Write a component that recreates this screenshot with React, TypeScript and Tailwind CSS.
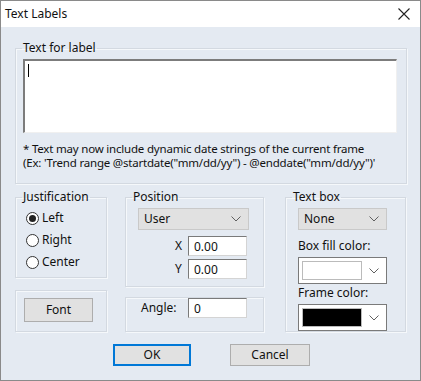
import React, { useState } from 'react';

const FONT = "font-['Segoe_UI','Noto_Sans',sans-serif]";

const Chevron = ({ className = '' }: { className?: string }) => (
  <svg width="10" height="6" viewBox="0 0 10 6" className={className}>
    <path d="M0.5 0.5 L5 5 L9.5 0.5" fill="none" stroke="#606060" strokeWidth="1" />
  </svg>
);

const Group = ({
  label,
  className = '',
  inner = '',
  children,
}: {
  label?: string;
  className?: string;
  inner?: string;
  children: React.ReactNode;
}) => (
  <fieldset className={`border border-[#d3d9e1] shadow-[inset_1px_1px_0_#f5f8fb,1px_1px_0_#f5f8fb] ${className}`}>
    {label && <legend className="ml-[6px] px-[1px] leading-[16px]">{label}</legend>}
    <div className={inner}>{children}</div>
  </fieldset>
);

const Radio = ({ label, checked, onClick }: { label: string; checked: boolean; onClick: () => void }) => (
  <button onClick={onClick} className="flex items-center h-[16px] gap-[3px]">
    <span className="w-[13px] h-[13px] rounded-full border border-[#333] bg-white flex items-center justify-center">
      {checked && <span className="w-[7px] h-[7px] rounded-full bg-[#222]" />}
    </span>
    <span>{label}</span>
  </button>
);

const Combo = ({ value, className = '' }: { value: string; className?: string }) => (
  <div className={`h-[22px] bg-[#e1e1e1] border border-[#c9c9c9] flex items-center pl-[5px] pr-[7px] justify-between ${className}`}>
    <span>{value}</span>
    <Chevron />
  </div>
);

const ColorCombo = ({ color }: { color: string }) => (
  <div className="w-[89px] h-[27px] bg-white border border-[#7a7a7a] flex items-center pl-[3px] pr-[7px] justify-between">
    <div className={`w-[60px] h-[19px] border border-[#bbb] ${color}`} />
    <Chevron />
  </div>
);

export default function App() {
  const [justify, setJustify] = useState<'Left' | 'Right' | 'Center'>('Left');
  const [labelText, setLabelText] = useState('');

  return (
    <div className={`w-[421px] h-[381px] border border-[#8a8a8a] flex flex-col text-[12px] text-[#111] ${FONT}`}>
      <div className="h-[26px] bg-white flex items-center justify-between pl-[4px] pr-[10px] shrink-0">
        <span className="text-[12px]">Text Labels</span>
        <svg width="12" height="12" viewBox="0 0 12 12">
          <path d="M0.5 0.5 L11.5 11.5 M11.5 0.5 L0.5 11.5" stroke="#222" strokeWidth="1.1" />
        </svg>
      </div>

      <div className="flex-1 bg-[#e4eaf2] pl-[14px] pt-[13px]">
        <Group label="Text for label" className="w-[392px] h-[144px]" inner="pl-[7px] pt-[3px]">
          <div className="relative">
            <textarea
              value={labelText}
              onChange={(e) => setLabelText(e.target.value)}
              className="block w-[374px] h-[74px] bg-white border-t-2 border-l-2 border-[#7c7c7c] border-r border-b border-r-[#f0f0f0] border-b-[#f0f0f0] resize-none outline-none px-[3px] caret-black"
            />
            {labelText === '' && (
              <span className="absolute left-[5px] top-[5px] w-[1px] h-[13px] bg-black pointer-events-none" />
            )}
          </div>
          <div className="mt-[9px] leading-[14px] text-[11.5px] tracking-[-0.2px]">
            <div>* Text may now include dynamic date strings of the current frame</div>
            <div>(Ex: 'Trend range @startdate("mm/dd/yy") - @enddate("mm/dd/yy")'</div>
          </div>
        </Group>

        <div className="flex mt-[5px]">
          <div className="flex flex-col w-[92px]">
            <Group label="Justification" className="h-[89px]" inner="pl-[10px] pt-[5px]">
              <div className="flex flex-col gap-[6px]">
                {(['Left', 'Right', 'Center'] as const).map((j) => (
                  <Radio key={j} label={j} checked={justify === j} onClick={() => setJustify(j)} />
                ))}
              </div>
            </Group>
            <Group className="mt-[12px] h-[42px]" inner="pl-[8px] pt-[7px]">
              <button className="w-[69px] h-[24px] bg-[#e1e1e1] border border-[#adadad]">Font</button>
            </Group>
          </div>

          <div className="flex flex-col w-[139px] ml-[18px]">
            <Group label="Position" className="h-[98px]" inner="pl-[12px] pt-[3px]">
              <Combo value="User" className="w-[111px]" />
              <div className="flex flex-col gap-[3px] mt-[6px] ml-[37px]">
                {['X', 'Y'].map((l) => (
                  <div key={l} className="flex items-center">
                    <span className="w-[13px]">{l}</span>
                    <input
                      defaultValue="0.00"
                      className="w-[59px] h-[20px] bg-white border border-[#d4d4d4] border-l-[#7a7a7a] border-t-[#7a7a7a] px-[5px] outline-none"
                    />
                  </div>
                ))}
              </div>
            </Group>
            <Group className="mt-[10px] h-[35px]" inner="pl-[15px] h-full flex items-center">
              <span className="w-[47px]">Angle:</span>
              <input
                defaultValue="0"
                className="w-[59px] h-[20px] bg-white border border-[#d4d4d4] border-l-[#7a7a7a] border-t-[#7a7a7a] px-[5px] outline-none"
              />
            </Group>
          </div>

          <Group label="Text box" className="w-[121px] h-[143px] ml-[21px]" inner="pl-[12px] pt-[3px]">
            <Combo value="None" className="w-[89px]" />
            <div className="mt-[8px] leading-[16px]">Box fill color:</div>
            <div className="mt-[3px]"><ColorCombo color="bg-white" /></div>
            <div className="mt-[1px] leading-[16px]">Frame color:</div>
            <div className="mt-[3px]"><ColorCombo color="bg-black" /></div>
          </Group>
        </div>

        <div className="flex mt-[12px] ml-[98px] gap-[39px]">
          <button className="w-[78px] h-[22px] bg-[#e1e1e1] border-2 border-[#0078d7]">OK</button>
          <button className="w-[80px] h-[22px] bg-[#e1e1e1] border border-[#adadad]">Cancel</button>
        </div>
      </div>
    </div>
  );
}
